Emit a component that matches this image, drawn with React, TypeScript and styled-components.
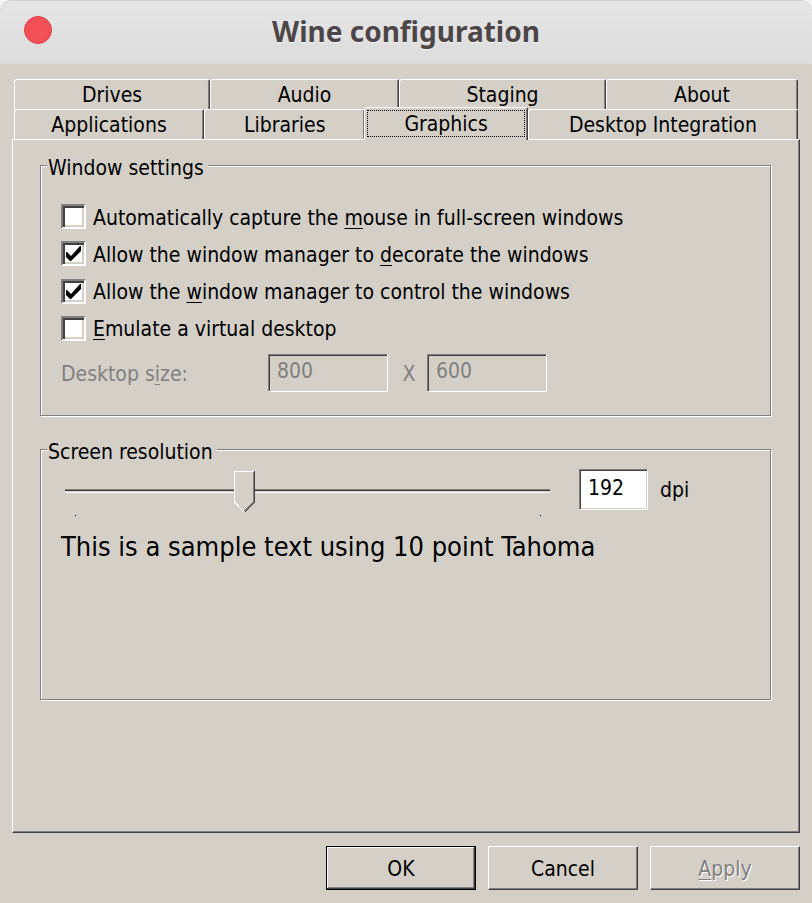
import React, { useState } from "react";
import styled, { createGlobalStyle, css } from "styled-components";

const face = "#d4d0c8";
const shade = "#808080";
const dark = "#404040";
const uiFont = `"DejaVu Sans Condensed", "Noto Sans", sans-serif`;

const GlobalStyle = createGlobalStyle`
  * { box-sizing: border-box; }
  body { margin: 0; background: #f4f4f4; }
  button, input { font: inherit; color: inherit; }
`;

const raised = css`
  border: 1px solid;
  border-color: #fff ${dark} ${dark} #fff;
  box-shadow: inset -1px -1px ${shade};
`;

const Window = styled.main`
  display: flex;
  flex-direction: column;
  min-height: 100vh;
  background: ${face};
  color: #000;
  font: 21px/26px ${uiFont};
  border-radius: 12px 12px 0 0;
  overflow: hidden;
`;

const TitleBar = styled.header`
  display: grid;
  grid-template-columns: 28px 1fr 28px;
  align-items: center;
  height: 64px;
  padding: 0 24px 4px;
  background: linear-gradient(#e6e6e6, #dcdcdc);
  border-radius: 12px 12px 0 0;
  box-shadow: inset 0 1px #d0d0d0;
`;

const CloseButton = styled.button`
  width: 28px;
  height: 28px;
  padding: 0;
  border: 1px solid #dc3c48;
  border-radius: 50%;
  background: #f45058;
`;

const Title = styled.h1`
  margin: 0;
  padding-top: 2px;
  text-align: center;
  font: bold 28px/36px "Noto Sans", sans-serif;
  color: #4c4648;
  text-shadow: 0 1px #f4f4f4;
`;

const Body = styled.div`
  display: flex;
  flex-direction: column;
  flex: 1;
  padding: 15px 12px 13px;
`;

const TabRow = styled.div`
  display: flex;
  height: 30px;
  padding: 0 2px;
`;

const Tab = styled.button<{ $grow: number; $selected?: boolean }>`
  flex: ${(p) => p.$grow} 1 0;
  height: 30px;
  padding: 0;
  line-height: 26px;
  text-align: center;
  background: ${face};
  border: 1px solid;
  border-color: #fff ${dark} transparent #fff;
  border-bottom: 0;
  border-radius: 3px 2px 0 0;
  box-shadow: inset -1px 0 ${shade};
  white-space: nowrap;
  ${(p) =>
    p.$selected &&
    css`
      z-index: 1;
      height: 33px;
      margin: -2px 0 0 -1px;
      outline: 1px dotted #000;
      outline-offset: -4px;
    `}
`;

const Panel = styled.section`
  flex: 1;
  padding: 10px 27px 20px;
  ${raised}
`;

const Group = styled.fieldset`
  min-width: 0;
  min-height: 266px;
  margin: 0 1px 18px 0;
  padding: 0 20px;
  border: 1px solid ${shade};
  box-shadow: 1px 1px #fff, inset 1px 1px #fff;
`;

const Legend = styled.legend`
  margin-left: -14px;
  padding: 6px 4px 0 1px;
  line-height: 24px;
  background: ${face};
`;

const Options = styled.div`
  display: grid;
  align-content: space-between;
  height: 137px;
  margin-top: 24px;
`;

const Option = styled.label`
  display: flex;
  align-items: center;
  gap: 7px;
  height: 25px;
`;

const OptionText = styled.span`
  padding-top: 2px;
`;

const CheckFrame = styled.span`
  display: grid;
  width: 25px;
  height: 25px;
  > * {
    grid-area: 1 / 1;
  }
  > svg {
    visibility: hidden;
    pointer-events: none;
  }
  > input:checked + svg {
    visibility: visible;
  }
`;

const Box = styled.input`
  appearance: none;
  width: 25px;
  height: 25px;
  margin: 0;
  background: #fff;
  border: 2px solid;
  border-color: ${shade} #fff #fff ${shade};
  box-shadow: inset 2px 2px ${dark}, inset -2px -2px ${face};
`;

const Key = styled.span`
  text-decoration: underline;
  text-decoration-thickness: 1px;
  text-underline-offset: 3px;
`;

const SizeRow = styled.div`
  display: flex;
  align-items: center;
  margin-top: 13px;
  color: ${shade};
`;

const SizeLabel = styled.label`
  width: 207px;
  padding-top: 2px;
`;

const Times = styled.span`
  width: 39px;
  padding: 2px 0 0 3px;
  text-align: center;
`;

const Field = styled.input<{ $width: number; $height: number }>`
  width: ${(p) => p.$width}px;
  height: ${(p) => p.$height}px;
  padding: 0 7px 4px 8px;
  border: 1px solid;
  border-color: ${shade} #fff #fff ${shade};
  border-radius: 0;
  box-shadow: inset 1px 1px ${dark}, inset -1px -1px ${face};
  background: #fff;
  &:disabled {
    background: ${face};
  }
`;

const Resolution = styled.div`
  display: flex;
  align-items: flex-start;
  margin: 5px 0 0 4px;
`;

const SliderArea = styled.div`
  display: grid;
  flex: 1;
  height: 46px;
  grid-template-rows: 42px 1px;
  row-gap: 2px;
  margin-top: 2px;
`;

const thumb = encodeURIComponent(
  `<svg xmlns="http://www.w3.org/2000/svg" width="21" height="42" shape-rendering="crispEdges"><path d="M0 0H21V31L10.500 42L0 31Z" fill="${face}"/><path d="M.5 31V.5H20" fill="none" stroke="#fff"/><path d="M.5 31L10 41" fill="none" stroke="#fff"/><path d="M19.500 1V31L10.500 40" fill="none" stroke="${shade}"/><path d="M20.500 0V31.500L10.500 41.500" fill="none" stroke="${dark}"/></svg>`
);

const Slider = styled.input`
  appearance: none;
  width: 100%;
  height: 42px;
  margin: 0;
  background: linear-gradient(
      ${shade} 1px,
      ${dark} 1px 2px,
      ${face} 2px 3px,
      #fff 3px
    )
    0 18px / 100% 4px no-repeat;
  &::-webkit-slider-thumb {
    appearance: none;
    width: 21px;
    height: 42px;
    background: url("data:image/svg+xml,${thumb}") no-repeat;
  }
`;

const Ticks = styled.div`
  display: flex;
  justify-content: space-between;
  height: 1px;
  padding: 0 9px 0 10px;
  &::before,
  &::after {
    content: "";
    width: 1px;
    background: #000;
  }
`;

const DpiGroup = styled.label`
  display: flex;
  align-items: center;
  gap: 12px;
  width: 200px;
  padding-left: 29px;
`;

const Sample = styled.p`
  margin: 12px 0 0;
  font-size: 27px;
  line-height: 36px;
`;

const Actions = styled.footer`
  display: flex;
  justify-content: flex-end;
  gap: 12px;
  margin-top: 13px;
`;

const Action = styled.button<{ $primary?: boolean }>`
  width: 150px;
  height: 44px;
  padding: 2px 0 0;
  background: ${face};
  ${raised}
  ${(p) =>
    p.$primary &&
    css`
      border-color: #000;
      box-shadow: inset -1px -1px ${dark}, inset 1px 1px #fff,
        inset -2px -2px ${shade};
    `}
  &:disabled {
    color: ${shade};
    text-shadow: 1px 1px #fff;
  }
`;

const CheckMark = () => (
  <svg width="25" height="25" viewBox="0 0 25 25" aria-hidden="true">
    <path d="M5 11H6L10 15L19 5H20V10L10 20H9L5 16Z" fill="#000" />
  </svg>
);

type OptionItem = { before: string; key: string; after: string; on: boolean };

const options: OptionItem[] = [
  { before: "Automatically capture the ", key: "m", after: "ouse in full-screen windows", on: false },
  { before: "Allow the window manager to ", key: "d", after: "ecorate the windows", on: true },
  { before: "Allow the ", key: "w", after: "indow manager to control the windows", on: true },
  { before: "", key: "E", after: "mulate a virtual desktop", on: false },
];

const backTabs = [
  { name: "Drives", grow: 196 },
  { name: "Audio", grow: 189 },
  { name: "Staging", grow: 207 },
  { name: "About", grow: 192 },
];

const frontTabs = [
  { name: "Applications", grow: 190 },
  { name: "Libraries", grow: 161 },
  { name: "Graphics", grow: 163 },
  { name: "Desktop Integration", grow: 271 },
];

export default function App() {
  const [dpi, setDpi] = useState(192);
  return (
    <>
      <GlobalStyle />
      <Window>
        <TitleBar>
          <CloseButton aria-label="Close" />
          <Title>Wine configuration</Title>
        </TitleBar>
        <Body>
          {[backTabs, frontTabs].map((row, i) => (
            <TabRow key={i} role="tablist">
              {row.map((t) => (
                <Tab
                  key={t.name}
                  role="tab"
                  $grow={t.grow}
                  $selected={t.name === "Graphics"}
                  aria-selected={t.name === "Graphics"}
                >
                  {t.name}
                </Tab>
              ))}
            </TabRow>
          ))}
          <Panel role="tabpanel" aria-label="Graphics">
            <Group>
              <Legend>Window settings</Legend>
              <Options>
                {options.map((o) => (
                  <Option key={o.before + o.key}>
                    <CheckFrame>
                      <Box type="checkbox" defaultChecked={o.on} />
                      <CheckMark />
                    </CheckFrame>
                    <OptionText>
                      {o.before}
                      <Key>{o.key}</Key>
                      {o.after}
                    </OptionText>
                  </Option>
                ))}
              </Options>
              <SizeRow>
                <SizeLabel htmlFor="desktop-width">
                  Desktop s<Key>i</Key>ze:
                </SizeLabel>
                <Field id="desktop-width" $width={120} $height={38} defaultValue="800" disabled />
                <Times>X</Times>
                <Field aria-label="Desktop height" $width={120} $height={38} defaultValue="600" disabled />
              </SizeRow>
            </Group>
            <Group>
              <Legend>Screen resolution</Legend>
              <Resolution>
                <SliderArea>
                  <Slider
                    type="range"
                    aria-label="Screen resolution"
                    min={96}
                    max={360}
                    value={dpi}
                    onChange={(e) => setDpi(Number(e.target.value))}
                  />
                  <Ticks />
                </SliderArea>
                <DpiGroup>
                  <Field
                    $width={69}
                    $height={41}
                    value={dpi}
                    onChange={(e) => setDpi(Number(e.target.value) || 0)}
                  />
                  dpi
                </DpiGroup>
              </Resolution>
              <Sample>This is a sample text using 10 point Tahoma</Sample>
            </Group>
          </Panel>
          <Actions>
            <Action $primary>OK</Action>
            <Action>Cancel</Action>
            <Action disabled>
              <Key>A</Key>pply
            </Action>
          </Actions>
        </Body>
      </Window>
    </>
  );
}
